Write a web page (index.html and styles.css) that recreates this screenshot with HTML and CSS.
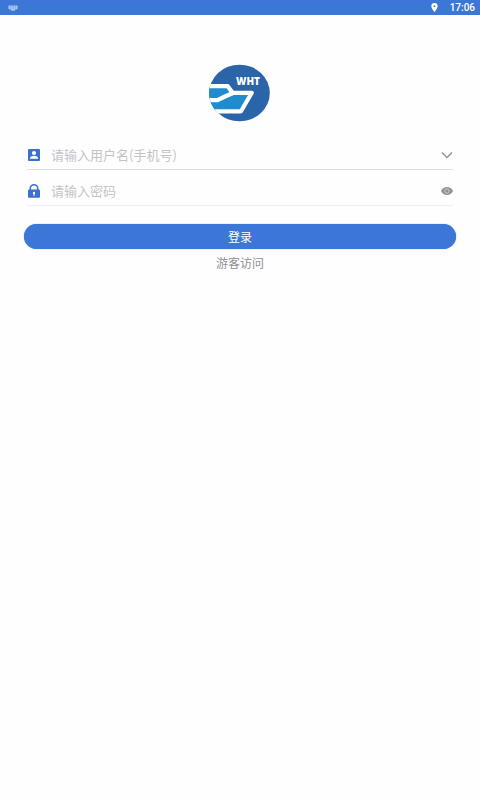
FILE: index.html
```html
<!DOCTYPE html>
<html lang="zh-CN">
<head>
<meta charset="utf-8">
<meta name="viewport" content="width=device-width, initial-scale=1">
<title>登录</title>
<link rel="stylesheet" href="styles.css">
</head>
<body>
<header class="status">
  <svg class="status-keyboard" viewBox="0 0 10 8" width="10" height="8" aria-hidden="true">
    <path d="M.5 1.500h9v3l-1 1h-7l-1-1z" fill="#a9c8f3"/>
    <path d="M2 2.500h6M2 4h6" stroke="#5d8fdd" stroke-width=".6" stroke-dasharray="1 .6"/>
    <path d="M3 6h4" stroke="#d5e5fb"/>
  </svg>
  <svg class="status-pin" viewBox="0 0 14 20" width="7" height="9" aria-hidden="true">
    <path fill="#fff" fill-rule="evenodd" d="M7 0a7 7 0 0 0-7 7c0 5 7 13 7 13s7-8 7-13a7 7 0 0 0-7-7zm0 5a2 2 0 1 1 0 4 2 2 0 0 1 0-4z"/>
  </svg>
  <time class="clock">17:06</time>
</header>
<main class="login">
  <svg class="logo" viewBox="0 0 62 58" width="62" height="58" role="img" aria-label="WHT">
    <defs><clipPath id="disc"><ellipse cx="30.500" cy="29" rx="30.500" ry="28.500"/></clipPath></defs>
    <ellipse cx="30.500" cy="29" rx="30.300" ry="28.300" fill="#2b65a9"/>
    <g clip-path="url(#disc)" stroke="#fff" stroke-width="4.200" stroke-linejoin="round">
      <path d="M-3 22.200H18.800L23.500 28.800H42.800L32 47.300H-3z" fill="#1e8ccd"/>
      <path d="M-3 36.200H8.500L16 32.500 24 29" fill="none"/>
    </g>
    <text class="logo-text" x="27" y="21">WHT</text>
  </svg>
  <form class="form">
    <div class="field">
      <label class="field-icon" for="user" aria-label="用户名">
        <svg viewBox="0 0 14 14" width="14" height="14" aria-hidden="true">
          <rect x="1" y="1" width="12" height="12" rx="1" fill="#3b6fd0"/>
          <circle cx="7" cy="5" r="2.100" fill="#fff"/>
          <path d="M3 10.700V10c0-1.600 2.500-2.300 4-2.300s4 .7 4 2.300v.7z" fill="#fff"/>
        </svg>
      </label>
      <input class="input" id="user" type="text" placeholder="请输入用户名(手机号)">
      <button class="field-action" type="button" aria-label="展开">
        <svg viewBox="0 0 12 12" width="12" height="12" aria-hidden="true">
          <path d="M1 3.500 6 8.500 11 3.500" fill="none" stroke="#949498" stroke-width="1.500"/>
        </svg>
      </button>
    </div>
    <div class="field field-light">
      <label class="field-icon" for="pass" aria-label="密码">
        <svg viewBox="0 0 14 14" width="14" height="14" aria-hidden="true">
          <path d="M3.300 6V4.200a3.700 3.400 0 0 1 7.400 0V6" fill="none" stroke="#3b6fd0" stroke-width="1.600"/>
          <rect x="1" y="5.500" width="12" height="8.300" rx="1" fill="#3b6fd0"/>
          <circle cx="7" cy="9" r="1.200" fill="#fff"/>
          <path d="M7 9v3" stroke="#fff"/>
        </svg>
      </label>
      <input class="input" id="pass" type="password" placeholder="请输入密码">
      <button class="field-action" type="button" aria-label="显示密码">
        <svg viewBox="0 0 12 12" width="12" height="12" aria-hidden="true">
          <path d="M0 6C1.200 3.300 3.500 2 6 2s4.800 1.300 6 4c-1.200 2.700-3.500 4-6 4S1.200 8.700 0 6z" fill="#919194"/>
          <circle cx="6" cy="6" r="2.200" fill="#919194" stroke="#d2d2d4" stroke-width=".9"/>
        </svg>
      </button>
    </div>
    <button class="submit" type="submit">登录</button>
  </form>
  <a class="guest" href="#">游客访问</a>
</main>
</body>
</html>
```
FILE: styles.css
```css
* {
  box-sizing: border-box;
}

body {
  margin: 0;
  background: #fefefe;
  font-family: "Noto Sans CJK SC", sans-serif;
}

.status {
  display: flex;
  align-items: center;
  height: 15px;
  padding: 0 5px 0 8px;
  background: #3c76d7;
}

.status-pin {
  margin-left: auto;
}

.clock {
  margin-left: 12px;
  color: #fff;
  font-family: Roboto, sans-serif;
  font-size: 10px;
  font-weight: 500;
  line-height: 16px;
}

.login {
  display: flex;
  flex-direction: column;
  align-items: center;
  padding: 49px 24px 0;
}

.logo {
  display: block;
}

.logo-text {
  fill: #fff;
  font-family: "Open Sans", sans-serif;
  font-size: 10px;
  font-weight: 800;
}

.form {
  width: 100%;
  margin-top: 12px;
}

.field {
  display: flex;
  align-items: center;
  height: 36px;
  margin: 0 3px;
  padding-top: 6px;
  border-bottom: 1px solid #dddde2;
}

.field-light {
  border-color: #efeff2;
}

.field-icon,
.field-action svg {
  display: block;
}

.field-icon {
  height: 14px;
}

.field-icon svg {
  display: block;
}

.input {
  flex: 1;
  min-width: 0;
  height: 28px;
  margin-left: 10px;
  padding: 0;
  border: 0;
  outline: 0;
  background: none;
  color: #333;
  font-family: inherit;
  font-size: 13px;
}

.input::placeholder {
  color: #c4c4c8;
  opacity: 1;
}

.field-action {
  padding: 0;
  border: 0;
  background: none;
}

.submit {
  display: block;
  width: 100%;
  height: 25px;
  margin-top: 18px;
  padding: 0;
  border: 0;
  border-radius: 13px;
  background: #3c76d7;
  box-shadow: 0 0 1px #3c76d7;
  color: #fff;
  font-family: inherit;
  font-size: 12px;
  line-height: 25px;
}

.guest {
  margin-top: 5px;
  color: #909094;
  font-size: 12px;
  line-height: 18px;
  text-decoration: none;
}
```
